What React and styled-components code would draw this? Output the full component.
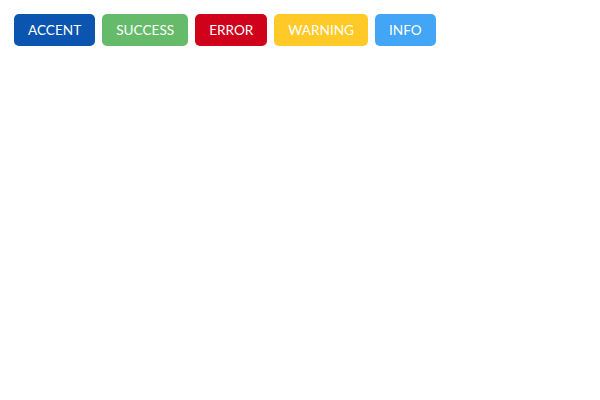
import React from "react"
import styled, { createGlobalStyle } from "styled-components"

const Global = createGlobalStyle`
  body {
    margin: 0;
    background: #ffffff;
    font-family: Lato, "Open Sans", sans-serif;
  }
`

const Bar = styled.div`
  display: flex;
  gap: 7px;
  padding: 14px;
`

const colors = {
  accent: "#0b55b0",
  success: "#66bb6a",
  error: "#d0021b",
  warning: "#ffca28",
  info: "#42a5f5",
}

const Button = styled.button`
  height: 32px;
  padding: 0 14px;
  border: none;
  border-radius: 5px;
  background: ${props => colors[props.kind]};
  color: #ffffff;
  font-family: Lato, "Open Sans", sans-serif;
  font-size: 13.6px;
  line-height: 32px;
  cursor: pointer;
`

export default () => (
  <>
    <Global />
    <Bar>
      <Button kind="accent">ACCENT</Button>
      <Button kind="success">SUCCESS</Button>
      <Button kind="error">ERROR</Button>
      <Button kind="warning">WARNING</Button>
      <Button kind="info">INFO</Button>
    </Bar>
  </>
)
